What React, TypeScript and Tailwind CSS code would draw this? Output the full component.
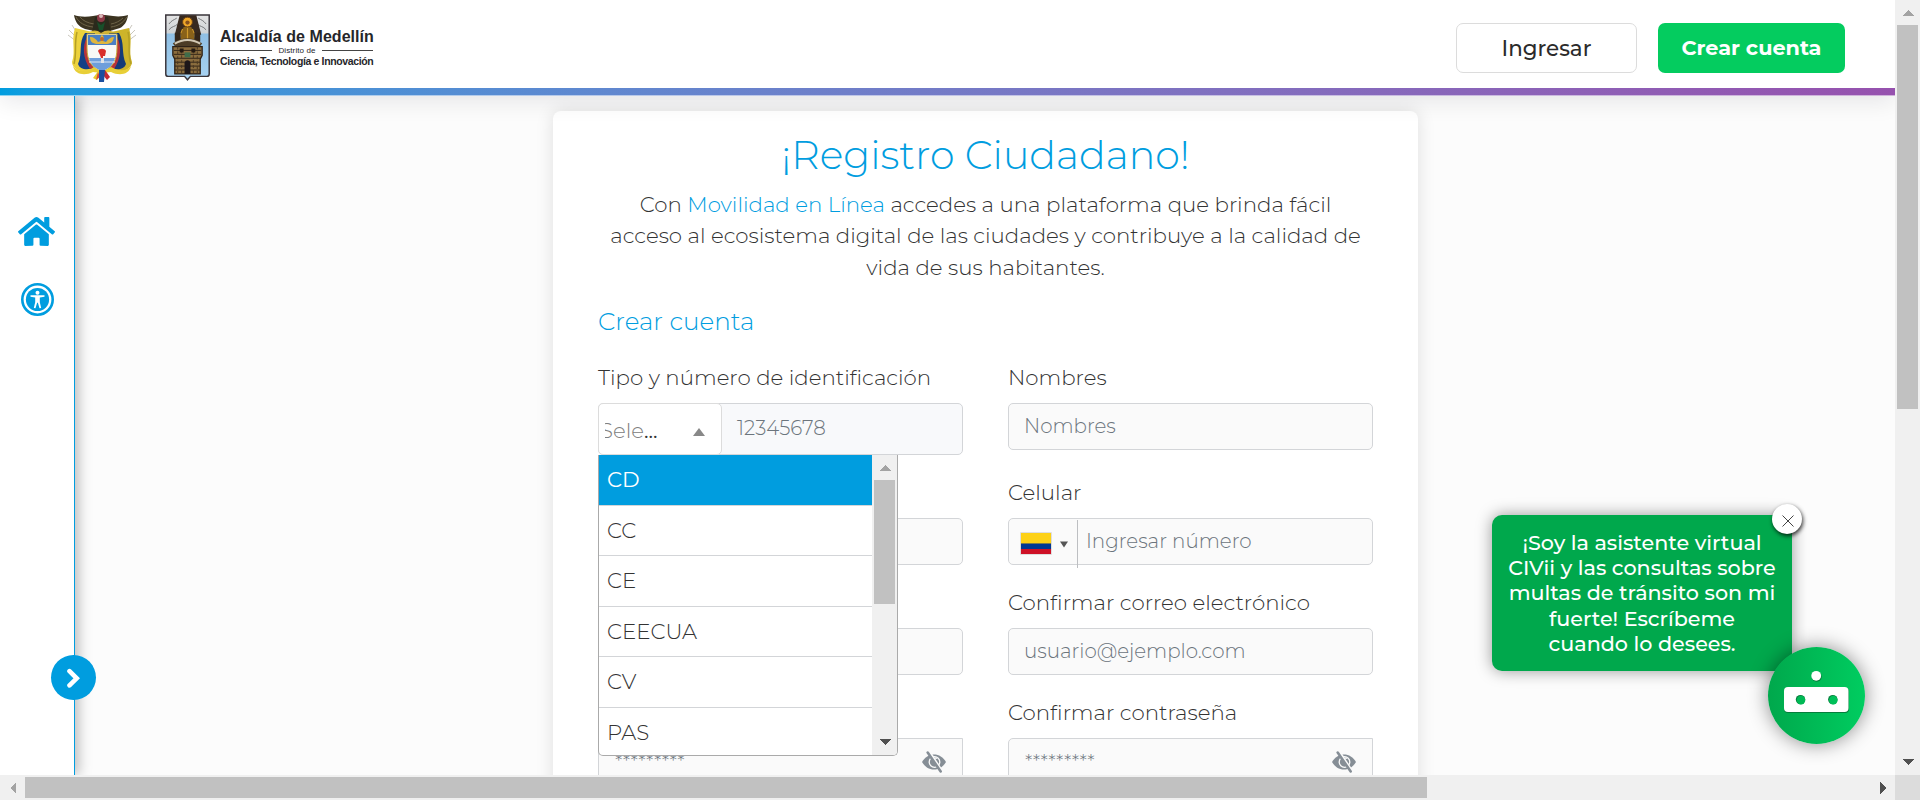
import React from 'react';
import { FaHome } from 'react-icons/fa';

const documentTypes = ['CD', 'CC', 'CE', 'CEECUA', 'CV', 'PAS'];

function ColombiaCrest() {
  return (
    <svg className="h-[70px] w-[68px]" viewBox="0 0 68 70">
      <path d="M4 12 9 20M1 17l7 7M0 22l8 6M64 12l-5 8M67 17l-7 7M68 22l-8 6" stroke="#c9c6bd" strokeWidth="1" />
      <path d="M6 2c5 2 13 2 19 1l6-1h6l8 1c6 1 12 0 15-1-1 7-4 11-8 13l-10 3-8 3-8-3-9-2C11 14 7 9 6 2Z" fill="#3b3320" />
      <path d="M8 4c3 6 9 9 17 10M12 4c3 4 8 6 14 7M59 4c-4 6-9 9-16 10M55 5c-3 3-7 5-12 6" stroke="#6e6448" strokeWidth="1" fill="none" />
      <path d="M27 4h13l3 15H24Z" fill="#2a2a1c" />
      <circle cx="33" cy="5" r="4" fill="#8e3a48" />
      <circle cx="33" cy="3" r="2" fill="#d8b9b9" />
      <path d="m29 9 4 3 4-3-2 8h-4Z" fill="#174f2a" />
      <path d="M18 22c5-5 10-6 15-2 6-4 11-3 16 2l-7-1-9 2-9-2Z" fill="#d6b43a" />
      <path d="M20 18 7 15C3 28 8 38 4 49c0 6 7 10 15 10l12-2V20Z" fill="#ecd23c" />
      <path d="M48 18l13-3c4 13-1 23 3 34 0 6-7 10-15 10l-12-2V20Z" fill="#cdb42a" />
      <path d="M9 19c-3 12 0 21-3 32M60 19c3 12-1 21 3 32" stroke="#b5a025" strokeWidth="1.500" fill="none" />
      <path d="M17 20C10 30 15 40 10 51c2 6 9 6 17 4V20Z" fill="#143f86" />
      <path d="M51 20c6 10 2 20 7 31-2 6-9 6-17 4V20Z" fill="#143b78" />
      <path d="M19 24c-5 9-4 22 3 32l4-1-4-31ZM49 24c5 9 4 22-3 32l-4-1 4-31Z" fill="#b8333a" />
      <path d="M19 21h30v14c0 12-4 20-15 24-11-4-15-12-15-24Z" fill="#f8f8f6" stroke="#c7a935" strokeWidth="1" />
      <path d="M20 22h28v10H20Z" fill="#4a7fc4" />
      <path d="M22 24c4 0 6 2 8 5l3-1c-1-4 0-6 1-6 2 1 2 4 1 6l3 1c2-3 5-5 8-5-1 5-3 7-8 7h-8c-5 0-8-2-8-7Z" fill="#dfb63e" />
      <circle cx="34" cy="26" r="2" fill="#c0672e" />
      <path d="M30 38c1-3 7-3 8 0l-1 5h-2v2h-2l-1-3Z" fill="#d92f2b" />
      <path d="M21 45h26c-2 7-6 11-13 13-7-2-11-6-13-13Z" fill="#6e9edb" />
      <path d="M21 49h26" stroke="#dce8f5" strokeWidth="1" />
      <path d="M33 45h3v5h-3Z" fill="#e2e4e8" />
      <path d="M5 53c5 7 14 6 21 1l8 5 9-5c7 4 15 5 20-1-2 9-12 10-20 6l-9 1-9-1c-8 4-18 3-20-6Z" fill="#e8cf37" />
      <path d="m31 57-6 8 4 2 4-6Z" fill="#e7c92f" />
      <path d="m30 59-2 8 4-3Z" fill="#d8483a" />
      <path d="m37 57 5 7-3 3-4-5Z" fill="#c62a32" />
      <path d="M31 57h6l-1 12h-5Z" fill="#1b4f9f" />
    </svg>
  );
}

function MedellinShield() {
  return (
    <svg className="mb-px h-[67px] w-[45px]" viewBox="0 0 46 68">
      <defs>
        <linearGradient id="sky" x1="0" x2="0" y1="0" y2="1">
          <stop offset="0" stopColor="#e4e4e4" />
          <stop offset="0.27" stopColor="#cfd3d6" />
          <stop offset="0.3" stopColor="#8fbfe4" />
          <stop offset="1" stopColor="#a8d3f2" />
        </linearGradient>
      </defs>
      <path d="M.8.8h44.4V61c0 1.500-1 2.500-2.500 2.500H26L23 67l-3-3.500H3.300C1.800 63.500.8 62.500.8 61Z" fill="url(#sky)" stroke="#39343a" strokeWidth="1.500" />
      <path d="M4 10c3-4 5-4 8-6M4 16c3-4 6-3 9-6M42 10c-3-4-5-4-8-6M42 16c-3-4-6-3-9-6" stroke="#77787a" strokeWidth="1" fill="none" />
      <path d="M15 1h17l2 8 3 12H10l3-12Z" fill="#37291f" />
      <circle cx="23" cy="8" r="5" fill="#f0a829" stroke="#6b4213" strokeWidth="1" />
      <circle cx="23" cy="8.500" r="2.200" fill="#87511d" />
      <path d="M19 13h8l4 13H15Z" fill="#8a6219" />
      <path d="m18 15-4 10M28 15l4 10M23 14v11" stroke="#d19a2b" strokeWidth="1.200" />
      <path d="M10 19h6v9h-6ZM30 19h6v9h-6Z" fill="#332519" />
      <path d="M8 30c7-7 23-7 30 0l-4 5H12Z" fill="#4c3c26" />
      <path d="M10 30c8-5 18-5 26 0" stroke="#d2c8b4" strokeWidth="2" fill="none" />
      <path d="M8 33h30v9l-2 4v15H10V46l-2-4Z" fill="#8b6d3e" stroke="#2d2117" strokeWidth="1.300" />
      <path d="M9 37h28M9 41h28M10 45h26M10 49h26M10 53h26M10 57h26" stroke="#332619" strokeWidth="1" />
      <path d="M13 33v28M17 37v24M29 37v24M33 33v28" stroke="#4a3822" strokeWidth="1" strokeDasharray="3 2" />
      <path d="M20 39h6v5h-6Z" fill="#3f6d4a" />
      <path d="M15 35h4v4h-4ZM27 35h4v4h-4Z" fill="#241a12" />
      <path d="M20 61V50c0-4 6-4 6 0v11Z" fill="#1d1719" />
    </svg>
  );
}

function AccessibilityIcon() {
  return (
    <svg className="h-[33px] w-[33px]" viewBox="0 0 33 33">
      <circle cx="16.500" cy="16.500" r="15.200" fill="#fff" stroke="currentColor" strokeWidth="2.600" />
      <circle cx="16.500" cy="16.500" r="11.600" fill="currentColor" />
      <circle cx="16.500" cy="9.700" r="2" fill="#fff" />
      <path d="M9.500 12.200h14v1.500l-4.700.8v4.800l1.400 5.700-1.700.3-1.600-5.500h-.8l-1.600 5.500-1.700-.3 1.400-5.700v-4.800l-4.700-.8Z" fill="#fff" />
    </svg>
  );
}

function EyeOffIcon() {
  return (
    <svg className="h-[22px] w-6" viewBox="0 0 24 22">
      <path d="M0 11C3 6 7 3.500 12 3.500S21 6 24 11c-3 5-7 7.500-12 7.500S3 16 0 11Z" fill="#868e96" />
      <circle cx="12.500" cy="11" r="5.300" fill="none" stroke="#fafafa" strokeWidth="1.300" />
      <path d="M12 8.500c0-1.500 2-2 3-1" stroke="#fafafa" strokeWidth="1.400" fill="none" />
      <path d="m7.500 1 13 20" stroke="#fafafa" strokeWidth="2.500" />
      <path d="m5.700 1.500 13 19" stroke="#868e96" strokeWidth="2.600" strokeLinecap="round" />
    </svg>
  );
}

function Arrow({ className, d }: { className: string; d: string }) {
  return (
    <svg className={className} viewBox="0 0 12 12" shapeRendering="crispEdges">
      <path d={d} fill="currentColor" />
    </svg>
  );
}

const UP = 'M0 9h12L6 3Z';
const DOWN = 'M0 3h12L6 9Z';
const LEFT = 'M9 0v12L3 6Z';
const RIGHT = 'M3 0v12l6-6Z';

const labelClass = 'h-[30px] whitespace-nowrap text-[21.32px] leading-[30px] text-[#333]';
const boxClass = 'flex h-[47px] w-full items-center rounded-[5px] border border-[#d3d5d8] bg-[#fafafa]';
const hintClass = 'whitespace-nowrap text-[19.85px] text-[#6c757d]';

function PasswordBox() {
  return (
    <div className="flex h-[47px] w-full items-center justify-between rounded-l-[5px] border border-[#d3d5d8] bg-[#fafafa] px-4">
      <span className="text-[19.7px] text-[#6c757d]">*********</span>
      <EyeOffIcon />
    </div>
  );
}

function Header() {
  return (
    <header className="relative z-20 shrink-0 shadow-[0_6px_22px_rgba(0,10,30,0.09)]">
      <div className="flex h-[88px] items-center justify-between bg-white pl-[68px] pr-[50px]">
        <div className="flex items-center pt-2">
          <ColombiaCrest />
          <div className="ml-[29px]">
            <MedellinShield />
          </div>
          <div className="mb-[3px] ml-[10px] w-[153px] font-['Liberation_Sans',Arial,sans-serif] text-[#26262a]">
            <div className="whitespace-nowrap text-[16px] font-bold leading-[19px] tracking-[0.05px]">Alcaldía de Medellín</div>
            <div className="flex items-center justify-between">
              <span className="h-px w-[52px] bg-[#444]" />
              <span className="text-[8px] leading-[9px] tracking-[0.1px]">Distrito de</span>
              <span className="h-px w-[51px] bg-[#444]" />
            </div>
            <div className="whitespace-nowrap text-[10.5px] font-bold leading-[12px] tracking-[-0.36px]">
              Ciencia, Tecnología e Innovación
            </div>
          </div>
        </div>
        <div className="flex gap-[21px] pt-2">
          <button className="h-[50px] w-[181px] rounded-[7px] border border-[#dcdcdc] text-[21.4px] font-medium text-[#2b2b2b]">
            Ingresar
          </button>
          <button className="h-[50px] w-[187px] rounded-[7px] bg-[#04cc5f] text-[20.8px] font-bold text-white">
            Crear cuenta
          </button>
        </div>
      </div>
      <div className="h-[7px] bg-linear-to-r from-[#009ddf] to-[#9651ae]" />
      <div className="bg-white">
        <div className="h-px bg-linear-to-r from-[#009ddf] to-[#9651ae] opacity-45" />
      </div>
    </header>
  );
}

function Sidebar() {
  return (
    <aside className="relative z-10 flex w-[75px] shrink-0 flex-col items-center border-r border-[#009ddf] bg-white pr-px pt-[119px] text-[#009ddf] shadow-[4px_0_12px_rgba(0,0,0,0.25)]">
      <FaHome className="h-[33px] w-[37px]" />
      <div className="mt-[35px] pl-px">
        <AccessibilityIcon />
      </div>
      <button className="absolute left-[51px] top-[559px] flex h-[45px] w-[45px] items-center justify-center rounded-full bg-[#009ddf]">
        <svg className="h-5 w-[13px]" viewBox="0 0 13 20">
          <path d="m2.500 3.200 7.200 7.100-7.200 7" fill="none" stroke="#fff" strokeWidth="4.600" strokeLinecap="round" />
        </svg>
      </button>
    </aside>
  );
}

function DocumentMenu() {
  return (
    <div className="absolute left-0 top-[93px] z-10 flex h-[301px] w-[300px] overflow-hidden rounded-b-[5px] border border-t-0 border-[#aaa] bg-white">
      <ul className="h-[303px] flex-1 text-[21.3px]">
        {documentTypes.map((type, i) => (
          <li
            key={type}
            className={
              i === 0
                ? 'flex h-[50.5px] items-center border-b border-[#d3d5d8] bg-[#009ddf] pl-2 pt-px font-normal text-white'
                : 'flex h-[50.5px] items-center border-b border-[#d3d5d8] pl-2 pt-px text-[#333]'
            }
          >
            {type}
          </li>
        ))}
      </ul>
      <div className="flex w-[25px] flex-col items-center justify-between bg-[#f0f0f0] pb-[7px]">
        <div className="flex flex-col items-center">
          <div className="flex h-[25px] items-center">
            <Arrow className="h-3 w-3 text-[#a3a3a3]" d={UP} />
          </div>
          <div className="h-[124px] w-[21px] bg-[#c1c1c1]" />
        </div>
        <Arrow className="h-3 w-3 text-[#505050]" d={DOWN} />
      </div>
    </div>
  );
}

function RegistrationCard() {
  return (
    <main className="ml-[478px] mt-[15px] h-[900px] w-[865px] shrink-0 rounded-lg bg-white px-[45px] pt-[21px] font-light shadow-[0_0_18px_rgba(0,0,0,0.12)]">
      <h1 className="whitespace-nowrap text-center text-[39.5px] font-light leading-[46px] text-[#009ddf]">¡Registro Ciudadano!</h1>
      <p className="mt-[10.5px] whitespace-nowrap text-center text-[21.32px] leading-[31.5px] text-[#333]">
        Con <span className="text-[#009ddf]">Movilidad en Línea</span> accedes a una plataforma que brinda fácil
        <br />
        acceso al ecosistema digital de las ciudades y contribuye a la calidad de
        <br />
        vida de sus habitantes.
      </p>
      <h2 className="mt-6 text-[24.6px] font-light leading-[28px] text-[#009ddf]">Crear cuenta</h2>
      <div className="mt-[27px] flex gap-[45px]">
        <section className="relative flex w-[365px] flex-col">
          <div className={labelClass}>Tipo y número de identificación</div>
          <div className="mb-[63px] mt-[11px] flex h-[52px] rounded-[5px] border border-[#d3d5d8] bg-[#f8f9fb]">
            <div className="-my-px -ml-px flex w-[124px] items-center justify-between rounded-[5px] border border-[#dcdcdc] bg-white pl-1.5 pr-4">
              <span className="flex overflow-hidden pt-[3px] text-[21.3px] text-[#808080]">
                <span className="-ml-[5px]">Sele</span>
                <span className="font-normal text-[#333]">...</span>
              </span>
              <svg className="mt-1.5 h-2 w-3" viewBox="0 0 12 8">
                <path d="M0 8h12L6 0Z" fill="#888" />
              </svg>
            </div>
            <span className={`${hintClass} ml-[15px] self-center`}>12345678</span>
          </div>
          <DocumentMenu />
          <div className={`${boxClass} mb-[63px]`} />
          <div className={`${boxClass} mb-[63px]`} />
          <PasswordBox />
        </section>
        <section className="flex w-[365px] flex-col">
          <div className={`${labelClass} mb-[11px]`}>Nombres</div>
          <div className={`${boxClass} pl-[15px]`}>
            <span className={hintClass}>Nombres</span>
          </div>
          <div className={`${labelClass} mb-[11px] mt-[27px]`}>Celular</div>
          <div className={boxClass}>
            <svg className="ml-[11px] mt-1 h-[23px] w-8" viewBox="0 0 32 23">
              <path d="M.5.500h31v22H.500Z" fill="none" stroke="#dedede" />
              <path d="M1 1h30v11H1Z" fill="#fdd116" />
              <path d="M1 12h30v5H1Z" fill="#003893" />
              <path d="M1 17h30v5H1Z" fill="#ce1126" />
              <path d="M1 11h30v1H1Z" fill="#7b7b4f" />
            </svg>
            <svg className="ml-2 mt-[5px] h-[7px] w-2" viewBox="0 0 8 7">
              <path d="M0 .5h8L4 6.500Z" fill="#555" />
            </svg>
            <span className="ml-[9px] mt-px h-12 w-px self-start bg-[#bdbfc2]" />
            <span className={`${hintClass} ml-2`}>Ingresar número</span>
          </div>
          <div className={`${labelClass} mb-[11px] mt-[22px]`}>Confirmar correo electrónico</div>
          <div className={`${boxClass} pl-[15px]`}>
            <span className={hintClass}>usuario@ejemplo.com</span>
          </div>
          <div className={`${labelClass} mb-[11px] mt-[22px]`}>Confirmar contraseña</div>
          <PasswordBox />
        </section>
      </div>
    </main>
  );
}

function ChatAssistant() {
  return (
    <div className="absolute bottom-[30px] right-[30px] z-10 h-[230px] w-[373px]">
      <div className="h-[156px] w-[300px] rounded-[10px] bg-[#00a84c] px-4 pt-[15px] text-center text-[20.7px] font-medium leading-[25.2px] text-white shadow-[0_0_16px_rgba(0,0,0,0.4)]">
        <p className="whitespace-nowrap">
          ¡Soy la asistente virtual
          <br />
          CIVii y las consultas sobre
          <br />
          multas de tránsito son mi
          <br />
          fuerte! Escríbeme
          <br />
          cuando lo desees.
        </p>
      </div>
      <button className="absolute left-[280px] top-[-11px] flex h-[30px] w-[30px] items-center justify-center rounded-full bg-white shadow-[1px_2px_4px_rgba(0,0,0,0.8)]">
        <svg className="ml-px mt-1 h-3 w-3" viewBox="0 0 12 12">
          <path d="m.5.500 11 11m0-11-11 11" stroke="#444" strokeWidth="1" />
        </svg>
      </button>
      <div className="absolute left-[276px] top-[132px] h-[97px] w-[97px] rounded-full bg-linear-to-r from-[#00a84c] to-[#00cd60] shadow-[0_0_20px_rgba(0,0,0,0.45)]">
        <svg className="h-[97px] w-[97px]" viewBox="0 0 97 97">
          <path d="M20 41h57a4 4 0 0 1 4 4v17a4 4 0 0 1-4 4H20a4 4 0 0 1-4-4V45a4 4 0 0 1 4-4Z" fill="#067d3c" />
          <circle cx="48.700" cy="29.700" r="5" fill="#067d3c" />
          <path d="M20 40h56.500a4 4 0 0 1 4 4v17a4 4 0 0 1-4 4H20a4 4 0 0 1-4-4V44a4 4 0 0 1 4-4Z" fill="#fff" />
          <circle cx="48.200" cy="28.800" r="4.900" fill="#fff" />
          <circle cx="32.500" cy="52.600" r="4.700" fill="#067d3c" />
          <circle cx="64.800" cy="52.600" r="4.700" fill="#067d3c" />
          <circle cx="33" cy="53.100" r="4.300" fill="#00b955" />
          <circle cx="65.300" cy="53.100" r="4.300" fill="#00c059" />
        </svg>
      </div>
    </div>
  );
}

export default function App() {
  return (
    <div className="flex h-[800px] w-[1920px] flex-col overflow-hidden bg-[#f0f0f0] font-['Montserrat','Inter',sans-serif]">
      <div className="flex h-[775px]">
        <div className="relative flex w-[1895px] flex-col overflow-hidden bg-[#fcfcfc]">
          <Header />
          <div className="flex h-[679px]">
            <Sidebar />
            <RegistrationCard />
          </div>
          <ChatAssistant />
        </div>
        <div className="flex w-[25px] flex-col items-center justify-between bg-[#f0f0f0] pb-[7px]">
          <div className="flex flex-col items-center">
            <div className="flex h-[25px] items-center">
              <Arrow className="h-3 w-3 text-[#a3a3a3]" d={UP} />
            </div>
            <div className="h-[384px] w-[21px] bg-[#c1c1c1]" />
          </div>
          <Arrow className="h-3 w-3 text-[#505050]" d={DOWN} />
        </div>
      </div>
      <div className="flex h-[25px] items-center">
        <div className="flex w-[25px] justify-center">
          <Arrow className="h-3 w-3 text-[#a3a3a3]" d={LEFT} />
        </div>
        <div className="h-[21px] w-[1402px] bg-[#c1c1c1]" />
        <div className="flex flex-1 justify-end pr-1.5">
          <Arrow className="h-3 w-3 text-[#505050]" d={RIGHT} />
        </div>
        <div className="h-[25px] w-[25px] bg-[#dcdcdc]" />
      </div>
    </div>
  );
}
